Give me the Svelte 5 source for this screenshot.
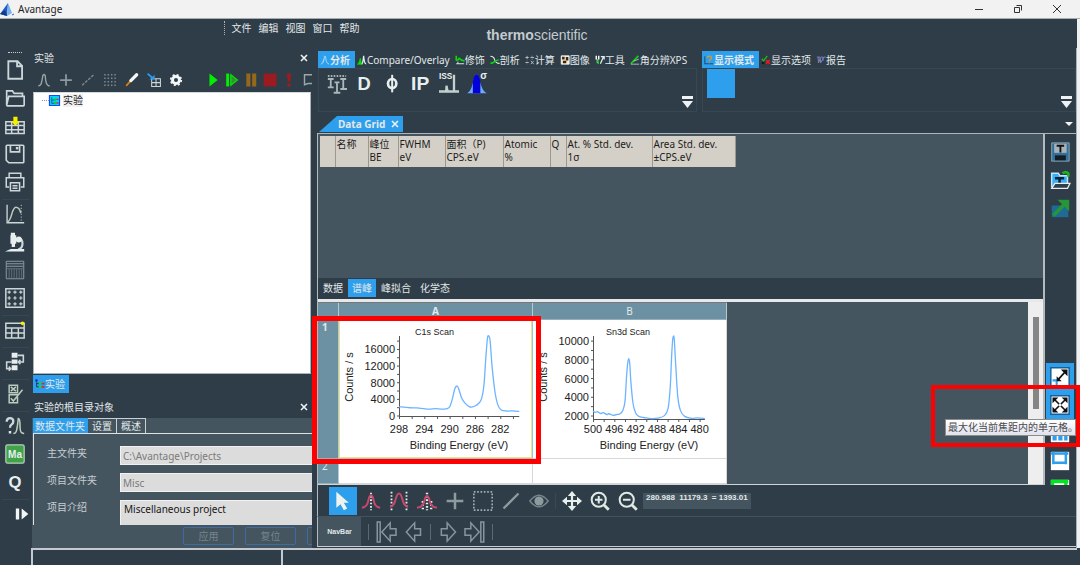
<script>
  const menus = ['文件', '编辑', '视图', '窗口', '帮助'];
  let description = $state('Miscellaneous project');

  const rail = [
    ['doc', 'folder', 'gridAdd', 'save', 'print'],
    ['curve', 'scope', 'sheet', 'dots'],
    ['table'],
    ['flow'],
    ['checks'],
    ['help', 'ma', 'q'],
    ['skip']
  ];

  const treeTools = ['peak', 'plus', 'dashline', 'dotgrid', 'brush', 'insert', 'gear'];
  const runTools = ['play', 'step', 'pause', 'stop', 'alert', 'book'];

  const ribbonA = [
    { icon: 'tA', label: '分析', on: true },
    { icon: 'tB', label: 'Compare/Overlay' },
    { icon: 'tC', label: '修饰' },
    { icon: 'tD', label: '剖析' },
    { icon: 'tE', label: '计算' },
    { icon: 'tF', label: '图像' },
    { icon: 'tG', label: '工具' },
    { icon: 'tH', label: '角分辨XPS' }
  ];
  const ribbonB = [
    { icon: 'tI', label: '显示模式', on: true },
    { icon: 'tJ', label: '显示选项' },
    { icon: 'tK', label: '报告' }
  ];
  const ribbonTools = ['ident', 'd', 'phi', 'ip', 'iss', 'sigma'];

  const columns = [
    { w: 15, a: '', b: '' },
    { w: 33, a: '名称', b: '' },
    { w: 30, a: '峰位', b: 'BE' },
    { w: 47, a: 'FWHM', b: 'eV' },
    { w: 58, a: '面积（P)', b: 'CPS.eV' },
    { w: 47, a: 'Atomic', b: '%' },
    { w: 16, a: 'Q', b: '' },
    { w: 86, a: 'At. % Std. dev.', b: '1σ' },
    { w: 83, a: 'Area Std. dev.', b: '±CPS.eV' }
  ];

  const gridTabs = ['数据', '谱峰', '峰拟合', '化学态'];
  const plotTools = ['arrow', 'pk1', 'pk2', 'pk3', 'plus', 'marquee', 'line', 'eye', '|', 'move', 'zin', 'zout'];

  const c1s = {
    title: 'C1s Scan', titleX: 76, x0: 60, perEv: 6.33, startEv: 298, endEv: 279,
    top: 16, base: 96, zeroAt: 0, perCount: 0.00416, labelX: 11, axisX: 120, tickY: 113,
    yTicks: [16000, 12000, 8000, 4000, 0], yMinor: 2000, yMax: 18000, xTicks: [298, 294, 290, 286, 282],
    points: [[298, 2170], [297.2, 2150], [296.3, 1980], [295.2, 1960], [294.5, 1850], [293.2, 1660], [292.3, 1760], [291, 1650], [290.1, 2000],
      [289.6, 3940], [289.2, 6500], [288.8, 7200], [288.5, 6200], [288.1, 4340], [287.6, 3150], [286.9, 2250], [286.4, 2170],
      [285.8, 2570], [285.05, 3780], [284.6, 7150], [284.3, 13600], [284.05, 18400], [283.85, 19300], [283.6, 18000],
      [283.3, 12000], [282.85, 5950], [282.4, 2730], [281.85, 1450], [281, 1200], [280, 1240], [279, 1100]]
  };
  const sn3d = {
    title: 'Sn3d Scan', titleX: 73, x0: 60, perEv: 5.33, startEv: 500, endEv: 479,
    top: 16, base: 99, zeroAt: 2000, perCount: 0.00936, labelX: 11, axisX: 116, tickY: 113,
    yTicks: [10000, 8000, 6000, 4000, 2000], yMinor: 1000, yMax: 10000, xTicks: [500, 496, 492, 488, 484, 480],
    points: [[500, 2500], [499.6, 2380], [499.2, 2460], [498.6, 2260], [498.1, 2360], [497.4, 2160], [497, 2240], [496.2, 2060], [495.6, 2160], [495, 2210], [494.4, 2600], [494, 3560],
      [493.7, 6240], [493.5, 7590], [493.3, 8120], [493.1, 7590], [492.9, 5700], [492.5, 3390], [492, 2320], [491.4, 1960],
      [490, 1790], [489, 1730], [487.8, 1780], [486.6, 2040], [485.9, 2850], [485.5, 5170], [485.25, 8370], [485.05, 10150],
      [484.9, 10540], [484.75, 10150], [484.5, 7660], [484.1, 4100], [483.6, 2600], [482.8, 1960], [481.5, 1750], [480.4, 1790], [479, 1720]]
  };

  const px = (c, ev) => c.x0 + (c.startEv - ev) * c.perEv;
  const py = (c, n) => (c.zeroAt ? c.base - 3 : c.base) - (n - c.zeroAt) * c.perCount;

  // Catmull-Rom spline through the measured points
  function curve(c) {
    const p = c.points.map(([e, n]) => [px(c, e), py(c, n)]);
    let d = `M${p[0][0]} ${p[0][1]}`;
    for (let i = 0; i < p.length - 1; i++) {
      const a = p[i - 1] ?? p[i], b = p[i], e = p[i + 1], f = p[i + 2] ?? e;
      d += `C${b[0] + (e[0] - a[0]) / 6} ${b[1] + (e[1] - a[1]) / 6} ${e[0] - (f[0] - b[0]) / 6} ${e[1] - (f[1] - b[1]) / 6} ${e[0]} ${e[1]}`;
    }
    return d;
  }
  function minorTicks(c) {
    const out = [];
    for (let n = c.zeroAt; n <= c.yMax; n += c.yMinor) out.push(n);
    return out;
  }
  function xMinor(c) {
    const out = [];
    for (let e = c.startEv; e >= c.endEv; e -= 2) out.push(e);
    return out;
  }
</script>

{#snippet icon(name, size = 22)}
  <svg class="ico" width={size} height={size} viewBox="0 0 24 24" fill="none" stroke="#cdd6da" stroke-width="1.800" aria-hidden="true">
    {#if name === 'doc'}
      <path d="M4 1.500h11l5.500 5.500v15.500H4z M14.500 2v5.500h6" stroke-width="2.200" />
    {:else if name === 'folder'}
      <path d="M2 20V3.500h7l2 3h10V10 M2 20.500L4.500 10H23v10.500q0 1-1 1H3q-1 0-1-1z" stroke-width="2" />
    {:else if name === 'gridAdd'}
      <path d="M1 7h22v14H1z M1 11.500h22 M1 16.500h22 M8 7v14 M16 7v14" />
      <path d="M10 1h5v5h3l-5.500 6L7 6h3z" fill="#f6ee00" stroke="none" />
    {:else if name === 'save'}
      <path d="M2.500 1.500h19q1 0 1 1v19q0 1-1 1h-17l-3-3v-17q0-1 1-1z M6.500 1.500v8h11v-8" stroke-width="2" />
      <path d="M13 3.500h3v3h-3z" fill="#cdd6da" stroke="none" />
    {:else if name === 'print'}
      <path d="M5 7V1.500h14V7 M5 18H1.500V7h21v11H19 M6.500 13h11v9.500h-11z M9 16.500h6 M9 19.500h6" stroke-width="1.800" />
    {:else if name === 'curve'}
      <path d="M2.500 1v21.500H23" stroke-width="1.600" />
      <path d="M3 21C8 21 8 4 13 4c4 0 5 3 6 7" stroke="#b8ccbc" />
      <path d="M19.500 1v21" stroke-dasharray="1.500 2" stroke-width="1" />
    {:else if name === 'scope'}
      <path d="M7 1h5v3h1.500v10H12v4H8v-4H6.500V4H7z" fill="#e8eef0" stroke="none" />
      <path d="M17 7q4 2 4 7t-5 7" stroke-width="2.600" />
      <circle cx="16.500" cy="9" r="3.600" fill="#e8eef0" stroke="none" />
      <path d="M0 23.500l7-3h16v3z" fill="#e8eef0" stroke="none" />
    {:else if name === 'sheet'}
      <g stroke="#8b989f" stroke-width="1.200"><path d="M1.500 1.500h21v21h-21z M2 4.500h20 M2 7.500h20" /><path d="M5 10v12 M8 10v12 M11 10v12 M14 10v12 M17 10v12 M20 10v12 M2 10.500h20" stroke="#5f6e77" /></g>
    {:else if name === 'dots'}
      <path d="M1 1h22v22H1z" />
      <path d="M3 5h4M5 3v4M10 5h4M12 3v4M17 5h4M19 3v4M3 12h4M5 10v4M10 12h4M12 10v4M17 12h4M19 10v4M3 19h4M5 17v4M10 19h4M12 17v4M17 19h4M19 17v4" stroke-width="1.400" />
    {:else if name === 'table'}
      <path d="M1 4h22v17.500H1z M1 9.500h22 M1 15.500h22 M8 9.500v12 M16 9.500v12" />
      <circle cx="21" cy="4" r="2.200" fill="#f6ee00" stroke="none" />
    {:else if name === 'flow'}
      <path d="M8 1h7v6H8z M8 9h7v5H8z M8 16h7v6H8z" fill="#e8eef0" stroke="none" />
      <path d="M15 4h7v8h-6 M8 12H2v8h5 M18.500 9.500L16 12l2.500 2.500 M4.500 17.500L7 20l-2.500 2.500" stroke-width="1.900" />
    {:else if name === 'checks'}
      <path d="M5 1.500h10v9H5z M5 13h10v9.500H5z M7 3.500l6 5M13 3.500l-6 5 M7 17l3 3.500L21 7" stroke="#b9ccbe" />
    {:else if name === 'help'}
      <path d="M2 7q0-4.500 4-4.500t4 4q0 2-2 3.500t-2 4" stroke-width="2.800" /><path d="M4.500 18h3v3h-3z" fill="#e0e6e8" stroke="none" />
      <path d="M10 21c4 0 4-4 5-10l1-8q2 0 2 8t2 9q1 1 3 1" stroke="#b9ccbe" stroke-width="1.900" />
    {:else if name === 'ma'}
      <rect x="1" y="1" width="22" height="22" rx="2" fill="#3fa348" stroke="#b9ccbe" stroke-width="1.500" />
      <text x="12" y="16.500" class="glyph" font-size="12" text-anchor="middle">Ma</text>
    {:else if name === 'q'}
      <text x="12" y="19" class="glyph" font-size="20" text-anchor="middle">Q</text>
    {:else if name === 'skip'}
      <path d="M13 5.500h4v13h-4z M20 5.500v13l8-6.500z" fill="#f2f5f6" stroke="none" />
    {:else if name === 'peak'}
      <path d="M2 22c6 0 6-6 8-18l2-1.500 2 1.500c1 12 2 18 8 18" stroke="#93a3a6" stroke-width="2.400" />
    {:else if name === 'plus'}
      <path d="M12 2v20M2 12h20" stroke="#8d9b9f" stroke-width="3" />
    {:else if name === 'dashline'}
      <path d="M2 21L22 3" stroke="#7b8a8f" stroke-width="2.400" stroke-dasharray="5 2" />
    {:else if name === 'dotgrid'}
      <path d="M2 3h20M2 9h20M2 15h20M2 21h20" stroke="#7b8a8f" stroke-width="2.600" stroke-dasharray="2.600 3.200" />
    {:else if name === 'brush'}
      <path d="M2 22l8-9" stroke="#e07b10" stroke-width="3" /><path d="M10 13L20 3" stroke="#f4f7f8" stroke-width="5.500" stroke-linecap="round" />
    {:else if name === 'insert'}
      <path d="M8 10h15v13H8z M8 16.500h15 M15.500 10v13" /><path d="M1 1l9 8" stroke="#2b9df0" stroke-width="3" /><path d="M4 11h9V3z" fill="#2b9df0" stroke="none" />
    {:else if name === 'gear'}
      <circle cx="12" cy="12" r="6" stroke="#f4f7f8" stroke-width="5" /><circle cx="12" cy="12" r="9" stroke="#f4f7f8" stroke-width="3" stroke-dasharray="3.500 3.570" />
    {:else if name === 'play'}
      <path d="M6 1v22l14-11z" fill="#00f000" stroke="none" />
    {:else if name === 'step'}
      <path d="M2 1h5v22H2z" fill="#00f000" stroke="none" /><path d="M10 3v18l11-9z" stroke="#00e000" stroke-width="2.500" fill="#3b8a3d" />
    {:else if name === 'pause'}
      <path d="M4 1h7v22H4z M14 1h7v22h-7z" fill="#98681a" stroke="none" />
    {:else if name === 'stop'}
      <path d="M1 1h22v22H1z" fill="#9b1c20" stroke="none" />
    {:else if name === 'alert'}
      <path d="M8 1h8l-2 14h-4z M9 18h6v5H9z" fill="#9b1c20" stroke="none" />
    {:else if name === 'book'}
      <path d="M18 3H6v17l6-2M18 3h8M12 18h14" stroke="#9aa8ad" stroke-width="2.400" />
    {:else if name === 'tree'}
      <path d="M1 1h5v5H1z" fill="#1515e0" stroke="none" /><path d="M4 6v13h6 M4 11h6" stroke="#103050" stroke-width="2" /><path d="M9 8h6v5H9z M9 16h6v5H9z" fill="#0fd840" stroke="none" /><path d="M16 9h7v4h-7z M16 17h7v4h-7z" fill="#e02828" stroke="none" />
    {:else if name === 'treeBox'}
      <path d="M1 1h22v22H1z" fill="#00d8f0" stroke="#1648ff" stroke-width="2.500" /><path d="M6 5v13h5 M6 11h5" stroke="#105090" stroke-width="2" /><path d="M11 8h4v5h-4z M11 15h4v5h-4z" fill="#0bc840" stroke="none" /><path d="M16 8h5v3h-5z M16 16h5v3h-5z" fill="#e02828" stroke="none" />
    {:else if name === 'tA'}
      <path d="M2 22c7-2 7-8 9-19h2c2 11 2 17 9 19 M9 10c0 5-4 8-4 8" stroke="#a9dcf8" stroke-width="2.200" />
    {:else if name === 'tB'}
      <path d="M1 22c4-2 5-8 7-14 2 8 2 14 5 14z" fill="#0ad80a" stroke="#0ad80a" stroke-width="2" /><path d="M11 21c4 0 3-8 5-19 1 9 1 19 6 19" stroke="#e6edef" stroke-width="3" />
    {:else if name === 'tC'}
      <path d="M3 2v11 M3 13c7 0 5-5 7-5s3 6 13 6" stroke="#0ad80a" stroke-width="4" /><path d="M3 21h19M7 16v4" stroke="#d7e0e3" stroke-width="2.500" />
    {:else if name === 'tD'}
      <path d="M1 3c8 0 9 4 10 8s4 9 12 9" stroke="#e6edef" stroke-width="2.600" /><path d="M1 20c11 0 9-8 20-8" stroke="#0ad80a" stroke-width="3.500" />
    {:else if name === 'tE'}
      <path d="M1 6h8M5 2v8M13 6h9M1 18h8M14 14l7 8M21 14l-7 8" stroke="#c2ccd0" stroke-width="2" /><path d="M17 2v2M17 9v2M5 14v1M5 21v1" stroke-width="2" />
    {:else if name === 'tF'}
      <path d="M3 2h19v20H3z" fill="#f6e9c9" stroke="#fff" stroke-width="2" /><path d="M5 4h6v7H5zM14 5h6v8h-6zM7 14h8v6H7z" fill="#3a2412" stroke="none" />
    {:else if name === 'tG'}
      <path d="M3 2v9M9 2v9M6 11v8" stroke="#fff" stroke-width="3.400" /><path d="M6 12l2 10" stroke="#0ad80a" stroke-width="3.400" /><path d="M13 21L20 5M14 4h8v7" stroke="#e6edef" stroke-width="3" />
    {:else if name === 'tH'}
      <path d="M2 21L20 2" stroke="#0ad80a" stroke-width="4" /><path d="M2 22h20M8 15l13-5" stroke="#b7c3c8" stroke-width="2.200" />
    {:else if name === 'tI'}
      <path d="M2 3v18h20" stroke="#1d4c80" stroke-width="2.500" /><path d="M8 7q0-4 5-4t5 4q0 3-5 6v2M13 18v2" stroke="#c79a3a" stroke-width="3.200" />
    {:else if name === 'tJ'}
      <path d="M2 9l4 5L15 2" stroke="#1cc01c" stroke-width="3" /><path d="M12 12l9 9M21 12l-9 9" stroke="#ee1c1c" stroke-width="4" /><path d="M2 17h6v5H2z" fill="#11191e" stroke="none" />
    {:else if name === 'tK'}
      <path d="M2 5h8l1 14L19 5h4M5 5l1 14 5-13M12 5h5l0 9" stroke="#7d83bd" stroke-width="2.400" />
    {:else if name === 'ident'}
      <path d="M1 2.500h22" stroke-dasharray="2 1.500" stroke-width="1.800" /><path d="M1 6h7M4.500 6v10M1 16h7 M16 6h7M19.500 6v12M16 18h8 M9 10h6M12 10v12M8 22.500h8" stroke="#a9b8b8" stroke-width="2.200" />
    {:else if name === 'd'}
      <text x="11" y="19" class="glyph" font-size="22" text-anchor="middle">D</text>
    {:else if name === 'phi'}
      <ellipse cx="11" cy="11.500" rx="5" ry="5.500" stroke="#e8efef" stroke-width="3.200" /><path d="M11 1v21" stroke="#e8efef" stroke-width="2.400" />
    {:else if name === 'ip'}
      <text x="11" y="19" class="glyph" font-size="23" text-anchor="middle">IP</text>
    {:else if name === 'iss'}
      <text x="8" y="6" class="glyph" font-size="10" text-anchor="middle">ISS</text>
      <path d="M0 21h24 M8 21q1-1 1-7 1 7 2 7M18 21V1" stroke="#c2d2cf" stroke-width="2.800" />
    {:else if name === 'sigma'}
      <path d="M0 23C8 20 7 2 11 0c5 1 4 19 13 23z" fill="#6fa8ff" stroke="none" /><path d="M7 23V9c1-5 2-8 4-9 3 1 4 4 5 9v14z" fill="#0202d8" stroke="none" />
      <text x="20" y="6" class="glyph" font-size="12" text-anchor="middle">σ</text>
    {:else if name === 'arrow'}
      <path d="M4 1v19l5-4 4 7 4-2-4-7h6z" fill="#eef3ee" stroke="none" />
    {:else if name === 'pk1'}
      <path d="M12 2v21" stroke-dasharray="2 2" stroke-width="2.200" stroke="#e8efef" /><path d="M1 20c8-1 7-8 9-13q2-4 4 0c2 5 1 12 9 13" stroke="#c8486c" stroke-width="2.400" />
    {:else if name === 'pk2'}
      <path d="M3 1v22M21 1v22" stroke-dasharray="2 2" stroke-width="2.200" stroke="#e8efef" /><path d="M1 19c8 0 6-16 11-16s3 16 11 16" stroke="#c8486c" stroke-width="2.400" />
    {:else if name === 'pk3'}
      <path d="M12 2v21M7 12v11M17 12v11" stroke-dasharray="2 2" stroke-width="2.800" stroke="#e8efef" /><path d="M0 20c9-1 8-7 10-12q2-4 4 0c2 5 1 11 10 12" stroke="#c8486c" stroke-width="2.400" />
    {:else if name === 'marquee'}
      <path d="M1 1h22v22H1z" stroke="#9fb0b0" stroke-dasharray="2 2" stroke-width="2" />
    {:else if name === 'line'}
      <path d="M3 21L21 3" stroke="#8d9b9f" stroke-width="2.800" />
    {:else if name === 'eye'}
      <path d="M1 12q11-14 22 0-11 14-22 0z" stroke="#76858c" /><circle cx="12" cy="12" r="5.500" fill="#8d9b9f" stroke="none" />
    {:else if name === 'move'}
      <path d="M12 3v18M3 12h18" stroke="#e8f0ec" stroke-width="2.600" /><path d="M12 0l5 6H7zM12 24l5-6H7zM0 12l6-5v10zM24 12l-6-5v10z" fill="#e8f0ec" stroke="none" />
    {:else if name === 'zin' || name === 'zout'}
      <g stroke="#dfe9e4" stroke-width="2.400"><circle cx="10.500" cy="10.500" r="8.500" /><path d="M6 10.500h9" />{#if name === 'zin'}<path d="M10.500 6v9" />{/if}<path d="M16.500 16.500L22.500 22.500" stroke-width="3.400" /></g>
    {:else if name === 'first'}
      <path d="M1.500 0h3.500v24H1.500z M7 12L17 1v7h7v8h-7v7z" stroke="#8696a0" />
    {:else if name === 'prev'}
      <path d="M4 12L14 1v7h7v8h-7v7z" stroke="#8696a0" />
    {:else if name === 'next'}
      <path d="M21 12L11 1v7H4v8h7v7z" stroke="#8696a0" />
    {:else if name === 'last'}
      <path d="M22.500 0H19v24h3.500z M17 12L7 1v7H0v8h7v7z" stroke="#8696a0" />
    {:else if name === 'saveT'}
      <path d="M2 1h21v22H2z" fill="#2f719c" stroke="#9aabb5" stroke-width="1" /><path d="M5 2h15v11H5z" fill="#a7b1b8" stroke="none" /><path d="M8 4.500h9M12.500 4.500v8" stroke="#111" stroke-width="2.200" /><path d="M6 16h13v6H6z" fill="#151d22" stroke="none" />
    {:else if name === 'openT'}
      <path d="M2 20V4h8l2 3h9v13z" fill="#39aef5" stroke="#bfe3fa" /><path d="M6 10h11M11.500 10v6" stroke="#0b2230" stroke-width="3" /><path d="M2 22l4-6h18l-3 6z" fill="#2f3e48" stroke="#e8eef0" stroke-width="1.500" /><path d="M15 4q4-3 7 0v4" stroke="#1bb51b" stroke-width="3" />
    {:else if name === 'export'}
      <path d="M2 9h20v14H2z" fill="#1e6c96" stroke="none" /><path d="M4 21L17 8" stroke="#27963b" stroke-width="4.500" /><path d="M9 2h14v14z" fill="#27963b" stroke="none" />
    {:else if name === 'expand'}
      <path d="M1 1h22v22H1z" fill="#fff" stroke="#1a5e95" /><path d="M3 16h5v6" stroke="#2e9fec" stroke-width="2.500" /><path d="M9 16L18 6" stroke="#111" stroke-width="2.200" /><path d="M13 3h8v8zM8 11v6h6z" fill="#111" stroke="none" />
    {:else if name === 'maximize'}
      <path d="M1 1h22v22H1z" fill="#fff" stroke="#1a5e95" /><path d="M6 6l12 12M18 6L6 18" stroke="#111" stroke-width="2" /><path d="M3 3h7L3 10zM21 3v7l-7-7zM3 21v-7l7 7zM21 21h-7l7-7z" fill="#111" stroke="none" /><path d="M10 12l2-2 2 2-2 2z" fill="#fff" stroke="none" />
    {:else if name === 'tiles'}
      <path d="M1 1h22v22H1z" fill="#fff" stroke="none" /><path d="M3 15h5v6H3zM10 15h5v6h-5zM17 15h4v6h-4z" fill="#2e9fec" stroke="none" />
    {:else if name === 'frame'}
      <path d="M1 1h22v22H1z" fill="#fff" stroke="none" /><path d="M4 1v15M19 1v15M1 3h21M3 14h17" stroke="#2e9fec" stroke-width="3" />
    {:else if name === 'frameG'}
      <path d="M1 1h22v22H1z" fill="#fff" stroke="none" /><path d="M1 3h21M3 1v15M19 1v15" stroke="#00e620" stroke-width="4" />
    {/if}
  </svg>
{/snippet}

{#snippet chart(c)}
  <svg class="chart" width="193" height="138" viewBox="0 0 193 138" role="img" aria-label={c.title}>
    <text x={c.titleX} y="15" font-size="9">{c.title}</text>
    <text x={-57} y="14" font-size="11" text-anchor="middle" transform="rotate(-90)">Counts / s</text>
    <path class="axis" d="M{c.x0 + .5} {c.top}V{c.base + .5}H{c.x0 + (c.startEv - c.endEv) * c.perEv}" />
    {#each minorTicks(c) as n}
      <path class="axis" d="M{c.x0 - 2} {py(c, n)}h3" />
    {/each}
    {#each xMinor(c) as e}
      <path class="axis" d="M{px(c, e) + .5} {c.base}v3" />
    {/each}
    {#each c.yTicks as n}
      <text x={c.x0 - 4} y={Math.round(py(c, n)) + 4} font-size="11" text-anchor="end">{n}</text>
    {/each}
    {#each c.xTicks as e}
      <text x={px(c, e)} y={c.tickY} font-size="11" text-anchor="middle">{e}</text>
    {/each}
    <text x={c.axisX} y="129" font-size="11" text-anchor="middle">Binding Energy (eV)</text>
    <path d={curve(c)} fill="none" stroke="#6cb4ff" stroke-width="1.300" />
  </svg>
{/snippet}

{#snippet overflow()}
  <button class="more" aria-label="更多">
    <svg width="11" height="12" viewBox="0 0 11 12" aria-hidden="true"><path d="M0 0h11v3H0zM0 5h11L5.500 12z" fill="#eef2f4" /></svg>
  </button>
{/snippet}

{#snippet cross()}
  <svg width="8" height="8" viewBox="0 0 8 8" aria-hidden="true"><path d="M1 1l6 6M7 1L1 7" stroke="#eef2f4" stroke-width="1.600" /></svg>
{/snippet}

<div class="app">
  <header class="title">
    <svg width="15" height="15" viewBox="0 0 15 15" aria-hidden="true"><path d="M8 1L0 12l7 2z" fill="#1f5fc4" /><path d="M8 1l4 10-5 3z" fill="#79b3ee" /><path d="M0 12l5-4 2 6z" fill="#123a8c" /><path d="M12 13l2-1" stroke="#1f5fc4" /></svg>
    <span class="name">Avantage</span>
    <button aria-label="最小化"><svg width="10" height="10" viewBox="0 0 10 10"><path d="M1 5.500h8" stroke="#333" /></svg></button>
    <button aria-label="还原"><svg width="10" height="10" viewBox="0 0 10 10" fill="none" stroke="#333"><path d="M1.500 3.500h5v5h-5zM3.500 1.500h5v5" /></svg></button>
    <button aria-label="关闭"><svg width="10" height="10" viewBox="0 0 10 10"><path d="M1 1l8 8M9 1L1 9" stroke="#333" /></svg></button>
  </header>

  <div class="top">
    <nav class="menus">
      {#each menus as m}<button>{m}</button>{/each}
    </nav>
    <div class="brand"><b>thermo</b>scientific</div>
  </div>

  <main>
    <aside class="rail">
      {#each rail as group}
        <div class="group">
          {#each group as name}<button aria-label={name}>{@render icon(name, 20)}</button>{/each}
        </div>
      {/each}
    </aside>

    <section class="left">
      <div class="head"><h2>实验</h2><button aria-label="关闭">{@render cross()}</button></div>
      <div class="tools">
        <div class="a">{#each treeTools as t}<button aria-label={t}>{@render icon(t, 14)}</button>{/each}</div>
        <div class="b">{#each runTools as t}<button aria-label={t}>{@render icon(t, 14)}</button>{/each}</div>
      </div>
      <div class="tree"><span class="node">{@render icon('treeBox', 11)}<span>实验</span></span></div>
      <div class="treetab"><button>{@render icon('tree', 10)}实验</button></div>
      <div class="head second"><h2>实验的根目录对象</h2><button aria-label="关闭">{@render cross()}</button></div>
      <div class="props">
        <div class="ptabs"><button class="on">数据文件夹</button><button>设置</button><button>概述</button></div>
        <div class="form">
          <label for="main">主文件夹</label><input id="main" value="C:\Avantage\Projects" disabled />
          <label for="proj">项目文件夹</label><input id="proj" value="Misc" disabled />
          <label for="desc">项目介绍</label><textarea id="desc" bind:value={description}></textarea>
        </div>
        <div class="actions"><button disabled>应用</button><button disabled>复位</button><button disabled aria-label="帮助"></button></div>
      </div>
    </section>

    <section class="work">
      <div class="ribbons">
        <div class="ribbon">
          <div class="rtabs">
            {#each ribbonA as r}<button class:on={r.on}>{@render icon(r.icon, 10)}{r.label}</button>{/each}
          </div>
          <div class="rbody">
            {#each ribbonTools as t}<button aria-label={t}>{@render icon(t, 20)}</button>{/each}
            {@render overflow()}
          </div>
        </div>
        <div class="ribbon">
          <div class="rtabs">
            {#each ribbonB as r}<button class:on={r.on}>{@render icon(r.icon, 10)}{r.label}</button>{/each}
          </div>
          <div class="rbody">
            <button class="tile" aria-label="显示"></button>
            {@render overflow()}
          </div>
        </div>
      </div>

      <div class="docs">
        <div class="doctab"><span>Data Grid</span><button aria-label="关闭">{@render cross()}</button></div>
        <button class="drop" aria-label="列表"><svg width="8" height="4" viewBox="0 0 8 4"><path d="M0 0h8L4 4z" fill="#f2f5f6" /></svg></button>
      </div>

      <div class="desk">
        <div class="center">
          <div class="data">
            <table>
              <colgroup>{#each columns as c}<col style="width:{c.w}px" />{/each}</colgroup>
              <thead><tr>{#each columns as c}<th>{c.a}<br />{c.b}</th>{/each}</tr></thead>
            </table>
          </div>
          <div class="gtabs">{#each gridTabs as t, i}<button class:on={i === 1}>{t}</button>{/each}</div>
          <div class="sheet">
            <div class="cells">
              <div class="hd"></div><div class="hd bold">A</div><div class="hd">B</div>
              <div class="hd row bold">1</div>
              <div class="cell sel">{@render chart(c1s)}<div class="mark"></div></div>
              <div class="cell">{@render chart(sn3d)}</div>
              <div class="hd row">2</div><div class="cell"></div><div class="cell"></div>
            </div>
            <div class="scroll"><i></i></div>
          </div>
        </div>
        <aside class="side">
          <div class="up">{#each ['saveT', 'openT', 'export'] as t}<button aria-label={t}>{@render icon(t, 20)}</button>{/each}</div>
          <div class="down">
            {#each ['expand', 'maximize', 'tiles', 'frame', 'frameG'] as t, i}<button class:on={i < 2} aria-label={t}>{@render icon(t, 20)}</button>{/each}
          </div>
          <div class="hint"><div class="tip" role="tooltip">最大化当前焦距内的单元格。</div></div>
        </aside>
      </div>

      <div class="plotbar">
        {#each plotTools as t, i}
          {#if t === '|'}<i class="sep"></i>{:else}<button class:on={i === 0} aria-label={t}>{@render icon(t, 20)}</button>{/if}
        {/each}
        <output>280.988&nbsp; 11179.3&nbsp; = 1393.01</output>
      </div>
      <div class="navbar">
        <span>NavBar</span>
        <i></i>
        <button aria-label="第一个">{@render icon('first', 20)}</button>
        <button aria-label="上一个">{@render icon('prev', 20)}</button>
        <i></i>
        <button aria-label="下一个">{@render icon('next', 20)}</button>
        <button aria-label="最后一个">{@render icon('last', 20)}</button>
        <i></i>
      </div>
    </section>
  </main>

  <footer><div></div><div></div></footer>
</div>

<style>
  :global(body) { margin: 0; background: #2e3d47; }
  .app {
    min-height: 100vh; box-sizing: border-box; display: flex; flex-direction: column; overflow: hidden;
    font: 10px/14px "Noto Sans", "Noto Sans CJK SC", sans-serif; color: #e3e8ea; background: #2e3d47;
  }
  .app :global(*) { box-sizing: border-box; }
  button { font: inherit; color: inherit; background: none; border: 0; padding: 0; margin: 0; display: flex; align-items: center; justify-content: center; white-space: nowrap; }
  svg { display: block; flex: none; }
  .ico { overflow: visible; }
  .glyph { font-family: "Liberation Sans", sans-serif; font-weight: bold; fill: #e8efef; stroke: none; }
  h2 { font: inherit; margin: 0; }

  .title { height: 19px; background: #f2f2f2; color: #222; display: flex; align-items: center; padding: 0 4px 0 0; border-bottom: 1px solid #a5adb1; }
  .title .name { flex: 1; padding-left: 3px; }
  .title button { width: 39px; height: 18px; }

  .top { height: 29px; display: grid; grid-template-columns: 1fr auto 1fr; align-items: start; padding: 2px 3px 0 0; border-right: 3px solid #eef0f2; }
  .menus { display: flex; gap: 7px; justify-self: end; margin-right: 127px; border-left: 1px dotted #aab4b9; padding-left: 6px; }
  .brand { font: 14px/16px "Liberation Sans", sans-serif; color: #c3cbcf; padding-top: 6px; grid-column: 2; }

  main { flex: 1; display: grid; grid-template-columns: 32px 280px minmax(0, 1fr); column-gap: 0; border-right: 3px solid #eef0f2; }

  .rail { display: flex; flex-direction: column; gap: 4px; padding: 8px 2px 0 1px; position: relative; }
  .rail::before { content: ""; position: absolute; top: 4px; left: 8px; width: 14px; border-top: 1px dotted #c8d0d4; }
  .rail button { width: 28px; height: 28px; }
  .group + .group { box-shadow: 0 -2px 0 -1px #384852; }

  .left { display: flex; flex-direction: column; min-width: 0; padding-left: 1px; }
  .head { display: flex; justify-content: space-between; align-items: center; height: 18px; margin-top: 1px; padding: 0 4px 0 1px; }
  .head.second { margin: 5px 0 2px; }
  .tools { display: flex; height: 25px; align-items: center; overflow: hidden; }
  .tools .a, .tools .b { display: flex; }
  .tools .a button { width: 22px; height: 22px; }
  .tools .b button { width: 19px; height: 22px; }
  .tools .b { padding-left: 16px; }
  .tree { flex: 1; background: #fff; margin-right: 1px; border: 1px solid #aab2b6; border-top-color: #d5dadd; padding: 1px 0 0 15px; color: #222; }
  .node { display: inline-flex; align-items: center; gap: 3px; position: relative; }
  .node span { background: #f0f0f0; line-height: 13px; }
  .node::before { content: ""; position: absolute; left: -7px; width: 7px; border-top: 1px dotted #999; }
  .treetab { display: flex; }
  .treetab button { height: 18px; background: #2e9fec; padding: 0 4px 0 2px; margin-top: 1px; }
  .props { background: #445560; margin-left: -1px; height: 130px; display: flex; flex-direction: column; overflow: hidden; }
  .ptabs { display: flex; border-bottom: 1px solid #dde2e4; margin-left: 1px; }
  .ptabs button { height: 15px; padding: 0 4px; border: 1px solid #c9d0d4; border-bottom: 0; border-left: 0; }
  .ptabs button.on { background: #2e9fec; border-color: #2e9fec; padding: 0 2px; }
  .form { display: grid; grid-template-columns: 73px 1fr; row-gap: 8px; padding: 12px 0 0 13px; margin-left: 1px; height: 91px; overflow: hidden; border-left: 1px solid #dde2e4; }
  .form label { color: #c7ced2; }
  input, textarea { font: inherit; width: 100%; height: 19px; background: #dcdcdc; border: 1px solid #f2f2f2; border-right: 0; color: #161616; padding: 0 2px; margin: 0; resize: none; border-radius: 0; display: block; opacity: 1; }
  input:disabled { color: #7a7a7a; }
  textarea { height: 32px; padding: 1px 3px; overflow: hidden; border-bottom: 0; }
  .actions { display: flex; gap: 11px; padding: 2px 0 0 151px; }
  .actions button { flex: none; width: 51px; height: 18px; border: 1px solid #3f6ba3; border-radius: 2px; color: #76858e; }

  .work { display: flex; flex-direction: column; min-width: 0; border-right: 1px solid #aab2b6; padding: 3px 0 1px 5px; }
  .ribbons { display: grid; grid-template-columns: minmax(379px, 1fr) minmax(0, 1fr); column-gap: 5px; padding-left: 1px; }
  .ribbon { min-width: 0; }
  .rtabs { display: flex; gap: 5px; }
  .rtabs button { height: 17px; }
  .rtabs button.on { background: #2e9fec; font-weight: bold; padding: 0 5px 0 2px; margin-right: -3px; }
  .rbody { height: 44px; border: 1px solid #384852; display: flex; padding: 0 3px 0 4px; }
  .rbody button { width: 28px; height: 30px; }
  .rbody .more { margin: auto 0 3px auto; width: 11px; height: 12px; }
  .rbody .tile { background: #2e9fec; height: 29px; }

  .docs { display: flex; justify-content: space-between; align-items: center; padding: 4px 3px 1px 2px; }
  .doctab { background: #2e9fec; clip-path: polygon(18px 0, 100% 0, 100% 100%, 0 100%); height: 16px; display: flex; align-items: center; gap: 6px; padding: 0 4px 0 19px; font-weight: bold; }

  .desk { flex: 1; display: grid; grid-template-columns: minmax(0, 1fr) 31px; border-top: 1px solid #aeb6ba; }
  .center { display: flex; flex-direction: column; min-width: 0; border: solid #b4bbbf; border-width: 0 2px 0 1px; }
  .data { flex: 1; background: #445560; padding: 2px 0 0 2px; }
  table { border-collapse: collapse; table-layout: fixed; width: 415px; background: #d4d0c8; color: #1c1c1c; }
  th { font-weight: normal; text-align: left; vertical-align: top; line-height: 13px; height: 31px; padding: 2px 0 0 1px; border-right: 1px solid #9a9892; white-space: nowrap; }
  .gtabs { display: flex; padding: 1px 0 2px 1px; }
  .gtabs button { height: 18px; padding: 0 4px; margin-right: 1px; }
  .gtabs button.on { background: #2e9fec; }
  .sheet { display: flex; height: 186px; background: #445560; border-top: 3px solid #e6e8ea; border-bottom: 1px solid #cfd4d6; }
  .cells { display: grid; grid-template-columns: 21px 194px 194px; grid-template-rows: 17px 139px 1fr; margin-right: auto; border-top: 1px solid #777; }
  .hd { background: #6b91a3; border-right: 1px solid #b9c9d0; border-bottom: 1px solid #94b0bc; display: flex; justify-content: center; align-items: center; }
  .hd.row { align-items: flex-start; justify-content: flex-start; padding-left: 4px; }
  .hd.bold { font-weight: bold; }
  .cell { background: #fff; border-right: 1px solid #d8d8d8; border-bottom: 1px solid #d8d8d8; position: relative; }
  .cell.sel { box-shadow: inset 0 0 0 1px #e3e68a; border-color: #9fc4d4; z-index: 2; }
  .mark { position: absolute; inset: -4px -9px -6px -27px; border: 5px solid #fe0000; pointer-events: none; }
  .chart text { font-family: "Liberation Sans", sans-serif; fill: #222; }
  .chart { overflow: visible; }
  .axis { fill: none; stroke: #555; stroke-width: 1; }
  .scroll { width: 15px; background: #eee; padding: 15px 5px 0; }
  .scroll i { display: block; width: 6px; height: 92px; background: #858585; }

  .side { display: flex; flex-direction: column; justify-content: space-between; position: relative; }
  .up { padding: 4px 0 0 1px; }
  .side button { width: 28px; height: 28px; }
  .down { height: 122px; overflow: hidden; padding-left: 1px; }
  .side button.on { background: #2e9fec; }
  .hint { position: absolute; right: -4px; bottom: 38px; width: 149px; height: 62px; border: 4px solid #fe0000; display: flex; align-items: flex-end; justify-content: flex-end; z-index: 3; }
  .tip { background: linear-gradient(#fff, #dfe1ee); color: #4c4c4c; border: 1px solid #8c8c8c; height: 17px; width: 131px; padding-left: 2px; margin-bottom: 7px; line-height: 15px; white-space: nowrap; }

  .plotbar { display: flex; align-items: center; height: 32px; padding-left: 11px; border-left: 1px solid #b4bbbf; border-bottom: 1px solid #43525c; }
  .plotbar button { width: 28px; height: 28px; }
  .plotbar button.on { background: #2e9fec; }
  .sep { width: 1px; height: 16px; background: #394953; margin: 0 2px; }
  output { background: #445560; font: bold 8px/10px "Liberation Sans", sans-serif; height: 16px; padding: 0 3px; margin-left: 1px; }
  .navbar { display: flex; align-items: center; height: 30px; border-left: 1px solid #b4bbbf; border-bottom: 1px solid #c6ccd0; gap: 7px; }
  .navbar span { background: #445560; width: 43px; height: 29px; display: flex; align-items: center; justify-content: center; font: bold 7px/10px "Liberation Sans", sans-serif; }
  .navbar i { width: 1px; height: 16px; background: #5a6973; }

  footer { height: 17px; border-top: 2px solid #c3c9ce; margin: 0 3px 0 31px; display: grid; grid-template-columns: 250px 1fr; }
  footer div { border-left: 2px solid #c3c9ce; }
</style>
